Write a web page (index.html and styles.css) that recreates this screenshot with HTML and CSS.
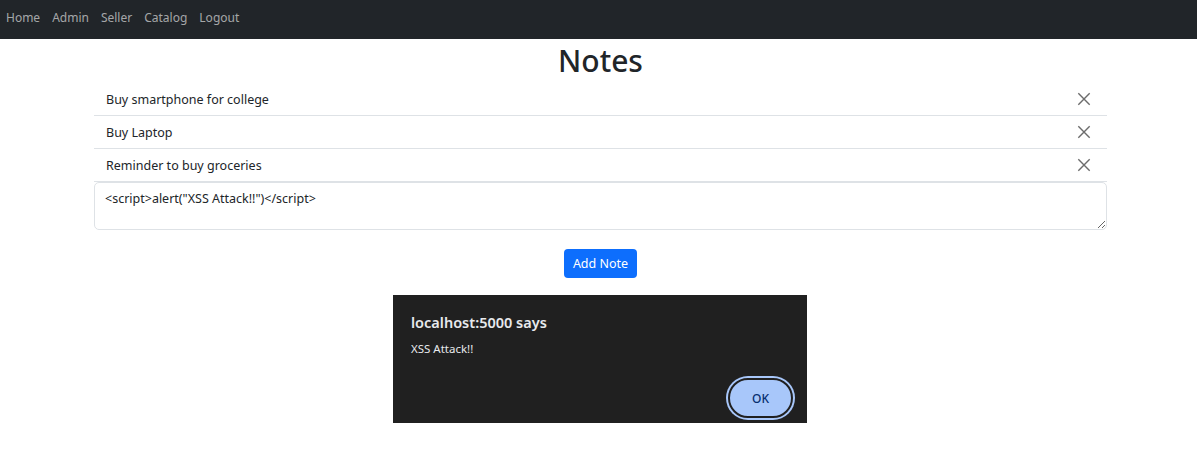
FILE: index.html
```html
<!DOCTYPE html>
<html>
<head>
<meta charset="utf-8">
<link rel="stylesheet" href="styles.css">
</head>
<body>
<nav class="navbar">
  <a class="nav-link" href="#">Home</a>
  <a class="nav-link" href="#">Admin</a>
  <a class="nav-link" href="#">Seller</a>
  <a class="nav-link" href="#">Catalog</a>
  <a class="nav-link" href="#">Logout</a>
</nav>
<main class="container">
  <h1 class="title">Notes</h1>
  <ul class="notes">
    <li class="note"><span>Buy smartphone for college</span><button class="close"><svg viewBox="0 0 16 16" width="14" height="14"><path d="M1.5 1.5l13 13M14.5 1.5l-13 13" stroke="#6c6c6c" stroke-width="1.6" fill="none"/></svg></button></li>
    <li class="note"><span>Buy Laptop</span><button class="close"><svg viewBox="0 0 16 16" width="14" height="14"><path d="M1.5 1.5l13 13M14.5 1.5l-13 13" stroke="#6c6c6c" stroke-width="1.6" fill="none"/></svg></button></li>
    <li class="note"><span>Reminder to buy groceries</span><button class="close"><svg viewBox="0 0 16 16" width="14" height="14"><path d="M1.5 1.5l13 13M14.5 1.5l-13 13" stroke="#6c6c6c" stroke-width="1.6" fill="none"/></svg></button></li>
  </ul>
  <textarea class="input">&lt;script&gt;alert("XSS Attack!!")&lt;/script&gt;</textarea>
  <div class="actions"><button class="btn">Add Note</button></div>
</main>
<div class="dialog">
  <div class="dialog-title">localhost:5000 says</div>
  <div class="dialog-msg">XSS Attack!!</div>
  <div class="dialog-actions"><button class="ok">OK</button></div>
</div>
</body>
</html>
```
FILE: styles.css
```css
* { box-sizing: border-box; }
body {
  margin: 0;
  font-family: "Noto Sans", "Open Sans", sans-serif;
  color: #212529;
  background: #fff;
  position: relative;
  height: 471px;
}
.navbar {
  background: #212529;
  height: 39px;
  display: flex;
  align-items: center;
  padding: 0 0 4px 6px;
  gap: 12px;
}
.nav-link {
  color: rgba(255,255,255,.6);
  text-decoration: none;
  font-size: 12px;
}
.container {
  margin: 0 90px 0 94px;
}
.title {
  margin: 0;
  text-align: center;
  font-size: 30px;
  font-weight: 500;
  line-height: 44px;
  padding-left: 0;
}
.notes {
  list-style: none;
  margin: 0;
  padding: 0;
}
.note {
  height: 33px;
  border-bottom: 1px solid #dee2e6;
  display: flex;
  align-items: center;
  justify-content: space-between;
  padding: 0 15px 0 12px;
  font-size: 12.5px;
}
.close {
  border: 0;
  background: none;
  padding: 0;
  width: 16px;
  height: 16px;
  display: flex;
  align-items: center;
  justify-content: center;
}
.input {
  display: block;
  width: 100%;
  height: 48px;
  border: 1px solid #dee2e6;
  border-radius: 5px;
  padding: 7px 10px;
  font-family: inherit;
  font-size: 12.5px;
  color: #212529;
  resize: vertical;
}
.actions {
  display: flex;
  justify-content: center;
  margin-top: 19px;
}
.btn {
  background: #0d6efd;
  color: #fff;
  border: 0;
  border-radius: 4px;
  height: 29px;
  padding: 0 9px;
  font-family: inherit;
  font-size: 12.5px;
}
.dialog {
  position: absolute;
  left: 393px;
  top: 295px;
  width: 414px;
  height: 128px;
  background: #202020;
  color: #e8eaed;
  padding: 17px 14px 0 18px;
}
.dialog-title {
  font-size: 14.5px;
  font-weight: 600;
  line-height: 20px;
}
.dialog-msg {
  margin-top: 9px;
  font-size: 11.5px;
  line-height: 16px;
}
.dialog-actions {
  display: flex;
  justify-content: flex-end;
  margin-top: 21px;
}
.ok {
  width: 65px;
  height: 40px;
  border-radius: 20px;
  background: #a8c7fa;
  color: #062e6f;
  border: 2px solid #202020;
  box-shadow: 0 0 0 2px #a8c7fa;
  font-family: inherit;
  font-size: 12px;
  font-weight: 500;
}
```
